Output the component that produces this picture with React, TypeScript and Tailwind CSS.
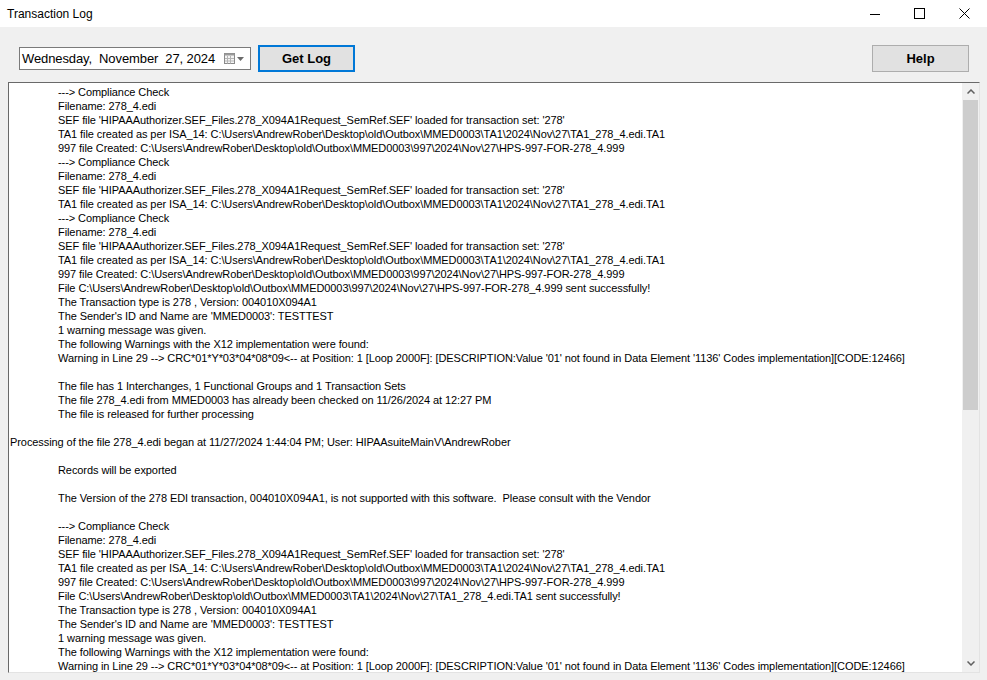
import React from "react";

type Line = { text: string; indent?: boolean };

const USR = "C:\\Users\\AndrewRober\\Desktop\\old\\Outbox\\MMED0003";
const SEF = "SEF file 'HIPAAAuthorizer.SEF_Files.278_X094A1Request_SemRef.SEF' loaded for transaction set: '278'";
const TA1 = `TA1 file created as per ISA_14: ${USR}\\TA1\\2024\\Nov\\27\\TA1_278_4.edi.TA1`;
const F997 = `997 file Created: ${USR}\\997\\2024\\Nov\\27\\HPS-997-FOR-278_4.999`;
const WARN =
  "Warning in Line 29 --> CRC*01*Y*03*04*08*09<-- at Position: 1 [Loop 2000F]: [DESCRIPTION:Value '01' not found in Data Element '1136' Codes implementation][CODE:12466]";

const i = (text: string): Line => ({ text, indent: true });

const LINES: Line[] = [
  i("---> Compliance Check"),
  i("Filename: 278_4.edi"),
  i(SEF),
  i(TA1),
  i(F997),
  i("---> Compliance Check"),
  i("Filename: 278_4.edi"),
  i(SEF),
  i(TA1),
  i("---> Compliance Check"),
  i("Filename: 278_4.edi"),
  i(SEF),
  i(TA1),
  i(F997),
  i(`File ${USR}\\997\\2024\\Nov\\27\\HPS-997-FOR-278_4.999 sent successfully!`),
  i("The Transaction type is 278 , Version: 004010X094A1"),
  i("The Sender's ID and Name are 'MMED0003': TESTTEST"),
  i("1 warning message was given."),
  i("The following Warnings with the X12 implementation were found:"),
  i(WARN),
  i(""),
  i("The file has 1 Interchanges, 1 Functional Groups and 1 Transaction Sets"),
  i("The file 278_4.edi from MMED0003 has already been checked on 11/26/2024 at 12:27 PM"),
  i("The file is released for further processing"),
  i(""),
  { text: "Processing of the file 278_4.edi began at 11/27/2024 1:44:04 PM; User: HIPAAsuiteMainV\\AndrewRober" },
  i(""),
  i("Records will be exported"),
  i(""),
  i("The Version of the 278 EDI transaction, 004010X094A1, is not supported with this software.  Please consult with the Vendor"),
  i(""),
  i("---> Compliance Check"),
  i("Filename: 278_4.edi"),
  i(SEF),
  i(TA1),
  i(F997),
  i(`File ${USR}\\TA1\\2024\\Nov\\27\\TA1_278_4.edi.TA1 sent successfully!`),
  i("The Transaction type is 278 , Version: 004010X094A1"),
  i("The Sender's ID and Name are 'MMED0003': TESTTEST"),
  i("1 warning message was given."),
  i("The following Warnings with the X12 implementation were found:"),
  i(WARN),
];

function TitleBar() {
  return (
    <div className="flex h-[27px] items-center bg-white">
      <span className="pl-[7px] text-[12px] text-black">Transaction Log</span>
      <div className="ml-auto flex h-full">
        <button className="flex w-[45px] items-center justify-center">
          <svg width="10" height="10" viewBox="0 0 10 10">
            <line x1="0" y1="5.5" x2="10" y2="5.5" stroke="#000" strokeWidth="1" />
          </svg>
        </button>
        <button className="flex w-[45px] items-center justify-center">
          <svg width="11" height="11" viewBox="0 0 11 11">
            <rect x="0.5" y="0.5" width="10" height="10" fill="none" stroke="#000" strokeWidth="1" />
          </svg>
        </button>
        <button className="flex w-[45px] items-center justify-center">
          <svg width="11" height="11" viewBox="0 0 11 11">
            <path d="M0.5 0.5 L10.5 10.5 M10.5 0.5 L0.5 10.5" stroke="#000" strokeWidth="1" />
          </svg>
        </button>
      </div>
    </div>
  );
}

function DatePicker() {
  return (
    <div className="flex h-[23px] w-[232px] items-center border border-[#7a7a7a] bg-white pl-[2px]">
      <span className="whitespace-nowrap text-[13px] leading-none tracking-[-0.1px] text-black">
        Wednesday,&nbsp; November&nbsp; 27, 2024
      </span>
      <div className="ml-auto mr-[6px] flex items-center gap-[2px]">
        <svg width="11" height="11" viewBox="0 0 11 11">
          <rect x="0.5" y="0.5" width="10" height="10" fill="#f4f4f4" stroke="#8a8a8a" />
          <rect x="0.5" y="0.5" width="10" height="2" fill="#9a9a9a" />
          <path d="M3.5 3 V10.5 M6.5 3 V10.5 M1 5.5 H10 M1 8 H10" stroke="#b5b5b5" strokeWidth="1" />
        </svg>
        <svg width="7" height="4" viewBox="0 0 7 4">
          <path d="M0 0 H7 L3.5 4 Z" fill="#6a6a6a" />
        </svg>
      </div>
    </div>
  );
}

function ScrollBar() {
  return (
    <div className="flex w-[17px] flex-col bg-[#f0f0f0]">
      <div className="flex h-[17px] items-center justify-center">
        <svg width="8" height="5" viewBox="0 0 8 5">
          <path d="M0.5 4.5 L4 1 L7.5 4.5" fill="none" stroke="#606060" strokeWidth="1.5" />
        </svg>
      </div>
      <div className="mx-[1px] h-[310px] bg-[#cdcdcd]" />
      <div className="flex-1" />
      <div className="flex h-[17px] items-center justify-center">
        <svg width="8" height="5" viewBox="0 0 8 5">
          <path d="M0.5 0.5 L4 4 L7.5 0.5" fill="none" stroke="#606060" strokeWidth="1.5" />
        </svg>
      </div>
    </div>
  );
}

export default function App() {
  return (
    <div
      className="flex h-[680px] w-[987px] flex-col overflow-hidden bg-[#f0f0f0]"
      style={{ fontFamily: '"Liberation Sans", Arial, sans-serif' }}
    >
      <TitleBar />
      <div className="flex items-center pl-[19px] pr-[18px] pt-[18px]">
        <DatePicker />
        <button className="ml-[7px] h-[27px] w-[97px] border-2 border-[#0078d7] bg-[#e1e1e1] text-[13px] font-bold text-black">
          Get Log
        </button>
        <button className="ml-auto h-[27px] w-[97px] border border-[#adadad] bg-[#e1e1e1] text-[13px] font-bold text-black">
          Help
        </button>
      </div>
      <div className="mb-[7px] ml-[8px] mr-[7px] mt-[10px] flex min-h-0 flex-1 border-l border-t border-l-[#696969] border-t-[#696969] border-r border-b border-r-[#e3e3e3] border-b-[#e3e3e3] bg-white">
        <div className="min-w-0 flex-1 overflow-hidden pl-[1px] pt-[2px]">
          {LINES.map((l, idx) => (
            <div
              key={idx}
              className={`h-[14px] whitespace-pre text-[11px] leading-[14px] tracking-[-0.08px] text-black ${l.indent ? "pl-[48px]" : ""}`}
            >
              {l.text}
            </div>
          ))}
        </div>
        <ScrollBar />
      </div>
    </div>
  );
}
